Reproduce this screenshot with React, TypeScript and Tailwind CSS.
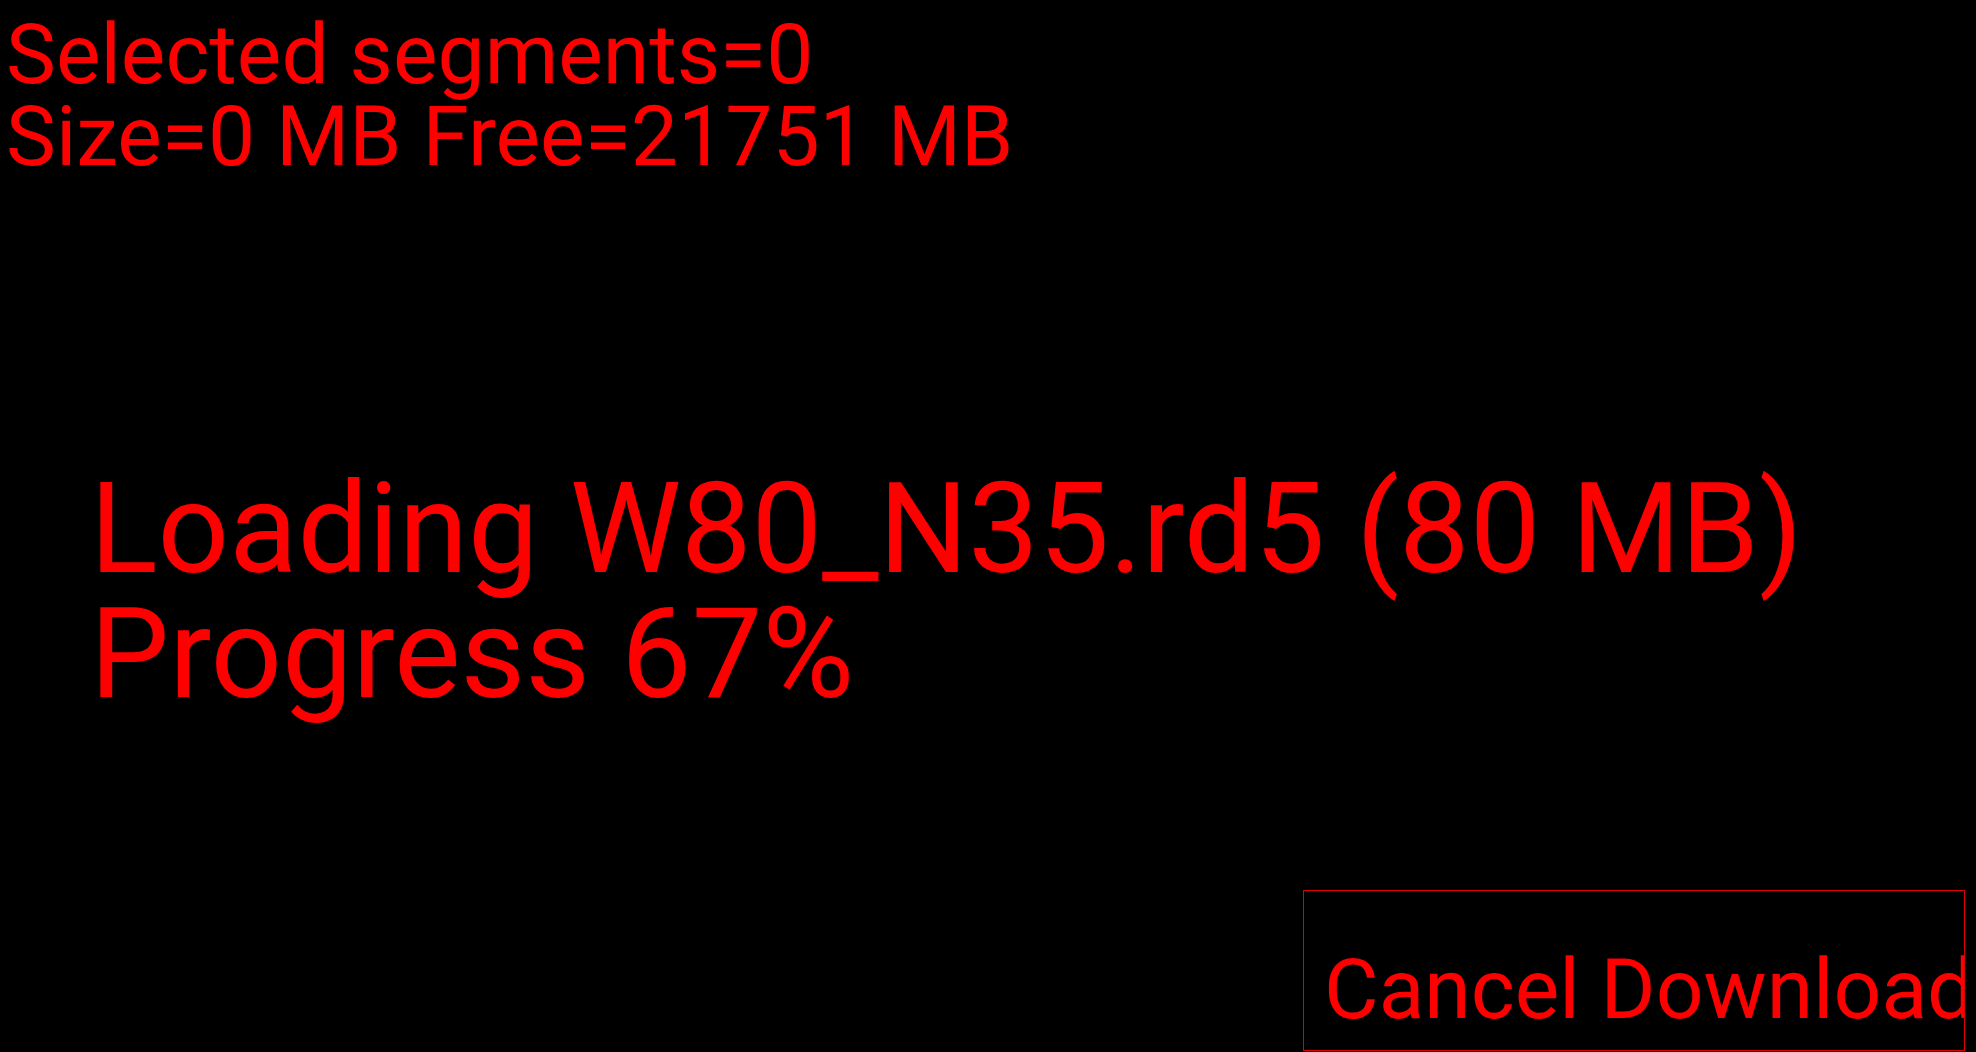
export default function App() {
  return (
    <div
      className="flex h-screen w-full flex-col overflow-hidden bg-black text-[#ff0000]"
      style={{ fontFamily: "Roboto, 'Noto Sans', sans-serif" }}
    >
      {/* Segment info */}
      <div className="pl-[6px] pt-[14px] text-[84px] leading-[82px] whitespace-nowrap">
        <div>Selected segments=0</div>
        <div>Size=0 MB Free=21751 MB</div>
      </div>

      {/* Loading status */}
      <div className="mt-[289px] pl-[90px] text-[125.5px] leading-[125px] whitespace-nowrap">
        <div>Loading W80_N35.rd5 (80 MB)</div>
        <div>Progress 67%</div>
      </div>

      {/* Cancel button */}
      <button className="mt-auto mb-[1px] mr-[11px] h-[161px] w-[662px] self-end overflow-hidden border border-[#e00000] pl-[20px] pt-[39px] text-left text-[84px] leading-[82px] whitespace-nowrap text-[#ff0000]">
        <span className="block">Cancel Download</span>
      </button>
    </div>
  );
}
